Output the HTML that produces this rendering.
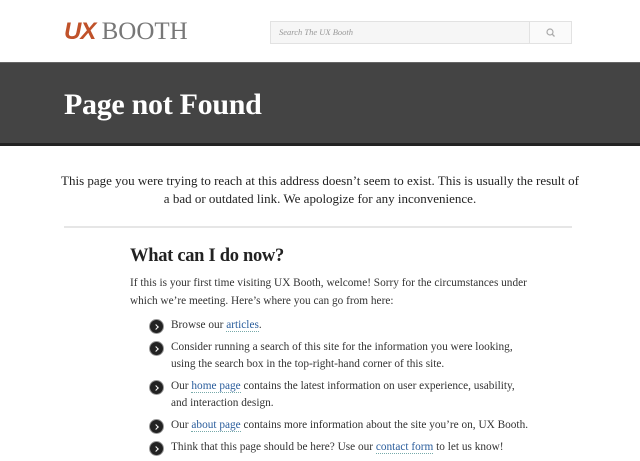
<!DOCTYPE html>
<html><head><style>
body{margin:0;width:640px;height:442px;overflow:hidden;background:#fff;font-family:"Liberation Serif",serif;color:#333}
.logo{position:absolute;left:64px;top:17px;font-size:25px;line-height:30px;white-space:nowrap}
.logo b{color:#c0522a;font-style:italic;font-family:"Liberation Sans",sans-serif;font-weight:900;font-size:24px;letter-spacing:-1px}
.logo span{color:#777;font-weight:normal;letter-spacing:0}
.search{position:absolute;left:270px;top:21px;height:21px;border:1px solid #e2e2e2;background:#f6f6f6;font-size:8.5px;font-style:italic;color:#999;line-height:21px;padding-left:8px;width:250px}
.btn{position:absolute;left:529px;top:21px;width:41px;height:21px;border:1px solid #e2e2e2;background:#fafafa}
.band{position:absolute;left:0;top:62px;width:640px;height:80px;background:#444;border-top:1px solid #666;border-bottom:3px solid #222}
.band h1{margin:0;position:absolute;left:64px;top:25px;color:#fff;font-size:30px;font-weight:bold;letter-spacing:-0.3px}
.intro{position:absolute;left:60px;width:520px;top:172px;text-align:center;font-size:13px;line-height:18px;color:#222}
.hr{position:absolute;left:64px;top:226px;width:508px;height:2px;background:#e6e6e6}
h2{position:absolute;left:130px;top:246px;margin:0;font-size:18.5px;font-weight:bold;color:#222;letter-spacing:-0.3px}
.p{position:absolute;left:130px;top:274px;width:400px;font-size:11.3px;line-height:18px;color:#333}
ul{position:absolute;left:171px;top:317px;margin:0;padding:0;list-style:none;width:360px;font-size:11.3px;line-height:17px;color:#333}
li{position:relative;margin-bottom:5px}
li:before{content:"";position:absolute;left:-21px;top:3px;width:13px;height:13px;border-radius:50%;background:#222;box-shadow:0 0 0 1px #999}
li:after{content:"";position:absolute;left:-17px;top:7.5px;width:3px;height:3px;border-right:1.5px solid #fff;border-top:1.5px solid #fff;transform:rotate(45deg)}
a{color:#2a5d9c;text-decoration:none;border-bottom:1px dotted #7aa}
</style></head><body>
<div class="logo"><b>UX</b> <span>BOOTH</span></div>
<div class="search">Search The UX Booth</div>
<div class="btn"><svg width="41" height="21"><circle cx="20" cy="10" r="3" fill="none" stroke="#aaa" stroke-width="1.2"/><line x1="22.2" y1="12.2" x2="24.5" y2="14.5" stroke="#aaa" stroke-width="1.3"/></svg></div>
<div class="band"><h1>Page not Found</h1></div>
<div class="intro">This page you were trying to reach at this address doesn’t seem to exist. This is usually the result of a bad or outdated link. We apologize for any inconvenience.</div>
<div class="hr"></div>
<h2>What can I do now?</h2>
<div class="p">If this is your first time visiting UX Booth, welcome! Sorry for the circumstances under which we’re meeting. Here’s where you can go from here:</div>
<ul>
<li>Browse our <a>articles</a>.</li>
<li>Consider running a search of this site for the information you were looking, using the search box in the top-right-hand corner of this site.</li>
<li>Our <a>home page</a> contains the latest information on user experience, usability, and interaction design.</li>
<li>Our <a>about page</a> contains more information about the site you’re on, UX Booth.</li>
<li>Think that this page should be here? Use our <a>contact form</a> to let us know!</li>
</ul>
</body></html>
